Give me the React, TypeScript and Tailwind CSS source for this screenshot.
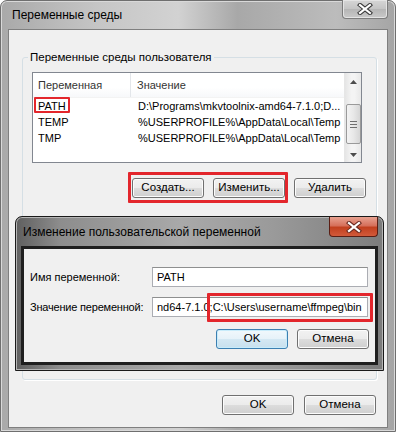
import clsx from 'clsx'

const font = "font-['Liberation_Sans','DejaVu_Sans',sans-serif]"

type BtnProps = {
  label: string
  className?: string
  focus?: boolean
}

const Btn: React.FC<BtnProps> = ({ label, className, focus }) => (
  <div
    className={clsx(
      'flex h-[20px] w-[72px] items-center justify-center rounded-[3px] border text-[11.5px] text-black',
      focus
        ? 'border-[#3c7fb1] bg-[linear-gradient(#f1f8fc_0%,#e6f2f9_50%,#d4e8f3_50%,#c8e0ee_100%)] shadow-[inset_0_0_0_1px_#c8ecfb]'
        : 'border-[#707070] bg-[linear-gradient(#f2f2f2_0%,#ebebeb_50%,#dddddd_50%,#cfcfcf_100%)] shadow-[inset_0_0_0_1px_#fcfcfc]',
      className,
    )}
  >
    {label}
  </div>
)

const CloseX: React.FC<{ light?: boolean }> = ({ light }) => (
  <svg width="16" height="12" viewBox="0 0 16 12">
    <path
      d="M3 2 L13 10 M13 2 L3 10"
      stroke={light ? '#6b2a20' : '#3a3a3a'}
      strokeWidth="4.2"
      strokeLinecap="square"
    />
    <path
      d="M3 2 L13 10 M13 2 L3 10"
      stroke="#ffffff"
      strokeWidth="2.2"
      strokeLinecap="square"
    />
  </svg>
)

const rows = [
  { name: 'PATH', value: 'D:\\Programs\\mkvtoolnix-amd64-7.1.0;D...' },
  { name: 'TEMP', value: '%USERPROFILE%\\AppData\\Local\\Temp' },
  { name: 'TMP', value: '%USERPROFILE%\\AppData\\Local\\Temp' },
]

const ScrollBar: React.FC = () => (
  <div className="flex w-[17px] flex-col items-center border-l border-[#e6e6e6] bg-[linear-gradient(90deg,#e5e5e5,#f4f4f4_40%,#f4f4f4_60%,#e8e8e8)]">
    <div className="flex h-[17px] w-full items-center justify-center">
      <svg width="7" height="4" viewBox="0 0 7 4">
        <path d="M0 4 L3.5 0 L7 4 Z" fill="#4d4d4d" />
      </svg>
    </div>
    <div className="mt-[14px] flex h-[40px] w-[15px] flex-col items-center justify-center gap-[2px] rounded-[2px] border border-[#9a9a9a] bg-[linear-gradient(90deg,#f3f3f3,#e8e8e8_50%,#d6d6d6)]">
      <div className="h-px w-[7px] bg-[#6f6f6f]" />
      <div className="h-px w-[7px] bg-[#6f6f6f]" />
      <div className="h-px w-[7px] bg-[#6f6f6f]" />
    </div>
    <div className="mt-auto flex h-[15px] w-full items-center justify-center">
      <svg width="7" height="4" viewBox="0 0 7 4">
        <path d="M0 0 L3.5 4 L7 0 Z" fill="#4d4d4d" />
      </svg>
    </div>
  </div>
)

const VarList: React.FC = () => (
  <div className="ml-[9px] mt-[14px] flex h-[91px] w-[330px] border border-[#828790] bg-white">
    <div className="flex flex-1 flex-col">
      <div className="flex h-[25px] items-center border-b border-[#f3f3f3] bg-[linear-gradient(#ffffff,#ffffff_60%,#f7f8fa)] text-[11px] text-[#333]">
        <div className="w-[98px] border-r border-[#e3e6ea] pl-[5px] leading-[24px]">
          Переменная
        </div>
        <div className="pl-[6px]">Значение</div>
      </div>
      {rows.map((row) => (
        <div key={row.name} className="flex h-[16px] items-center text-[11px] text-black">
          <div className="w-[98px] pl-[5px]">{row.name}</div>
          <div className="whitespace-nowrap pl-[7px]">{row.value}</div>
        </div>
      ))}
    </div>
    <ScrollBar />
  </div>
)

const EditDialog: React.FC = () => (
  <div className="absolute left-[15px] top-[216px] flex h-[155px] w-[369px] flex-col rounded-t-[7px] border border-[#1a1a1a] bg-[linear-gradient(90deg,#5f5f5f,#8d8d8d_12%,#a9a9a9_45%,#9a9a9a_70%,#7c7c7c)] shadow-[inset_0_0_0_1px_#b5b5b5]">
    <div className="relative flex h-[29px] items-center pl-[7px] text-[12px] text-black">
      Изменение пользовательской переменной
      <div className="absolute right-[5px] top-0 flex h-[20px] w-[49px] items-center justify-center rounded-b-[4px] border border-t-0 border-[#5a1e14] bg-[linear-gradient(#e8a291,#d6705b_45%,#c2401f_55%,#d25a3a)]">
        <CloseX light />
      </div>
    </div>
    <div className="mx-[5px] flex h-[119px] flex-col border-[3px] border-[#1f1f1f] bg-[#f0f0f0] text-[11px] text-black">
      <div className="mt-[18px] flex items-center pl-[6px]">
        <div className="w-[122px] whitespace-nowrap">Имя переменной:</div>
        <div className="flex h-[20px] w-[216px] items-center border border-[#abadb3] border-t-[#8e8f8f] bg-white pl-[4px]">
          PATH
        </div>
      </div>
      <div className="mt-[10px] flex items-center pl-[6px]">
        <div className="w-[122px] whitespace-nowrap tracking-[-0.2px]">Значение переменной:</div>
        <div className="flex h-[20px] w-[216px] items-center overflow-hidden whitespace-nowrap border border-[#abadb3] border-t-[#8e8f8f] bg-white pl-[4px]">
          nd64-7.1.0;C:\Users\username\ffmpeg\bin
        </div>
      </div>
      <div className="mt-[12px] flex justify-end gap-[9px] pr-[6px]">
        <Btn label="OK" focus />
        <Btn label="Отмена" />
      </div>
    </div>
  </div>
)

const App: React.FC = () => {
  return (
    <div className={clsx('relative h-[437px] w-[396px] overflow-hidden bg-white', font)}>
      <div className="flex h-[432px] w-[396px] flex-col rounded-t-[7px] border border-[#6f6f6f] bg-[linear-gradient(90deg,#a9a9a9,#c6c6c6_25%,#d2d2d2_45%,#a8a8a8_60%,#bcbcbc_85%,#a5a5a5)] px-[7px] pb-[3px] shadow-[inset_0_0_0_1px_#d9d9d9]">
        <div className="relative flex h-[28px] items-center pl-[4px] text-[12px] text-black">
          Переменные среды
          <div className="absolute right-[0px] top-[-1px] flex h-[19px] w-[46px] items-center justify-center rounded-b-[4px] border border-t-0 border-[#7c7c7c] bg-[linear-gradient(#d6d6d6,#c4c4c4_50%,#b5b5b5_50%,#c9c9c9)] shadow-[inset_0_0_0_1px_#e4e4e4]">
            <CloseX />
          </div>
        </div>
        <div className="flex flex-1 flex-col border border-[#7f7f7f] bg-[#f0f0f0] text-[11px] text-black">
          <div className="relative ml-[13px] mt-[27px] flex h-[323px] w-[355px] flex-col rounded-[3px] border border-[#d5dfe5] shadow-[1px_1px_0_#ffffff]">
            <span className="absolute left-[5px] top-[-9px] bg-[#f0f0f0] px-[2px] text-[11.5px] leading-[16px]">
              Переменные среды пользователя
            </span>
            <VarList />
            <div className="mt-[15px] flex justify-end gap-[9px] pr-[10px]">
              <Btn label="Создать..." />
              <Btn label="Изменить..." />
              <Btn label="Удалить" />
            </div>
          </div>
          <div className="mt-[15px] flex justify-end gap-[10px] pr-[11px]">
            <Btn label="OK" />
            <Btn label="Отмена" />
          </div>
        </div>
      </div>

      <EditDialog />

      {/* red marks */}
      <div className="absolute left-[34px] top-[97px] h-[16px] w-[36px] rounded-[1px] border-2 border-[#e3262c]" />
      <div className="absolute left-[128px] top-[172px] h-[31px] w-[160px] rounded-[1px] border-[3px] border-[#e3262c]" />
      <div className="absolute left-[207px] top-[293px] h-[29px] w-[166px] rounded-[1px] border-[3px] border-[#e3262c]" />
    </div>
  )
}

export default App
